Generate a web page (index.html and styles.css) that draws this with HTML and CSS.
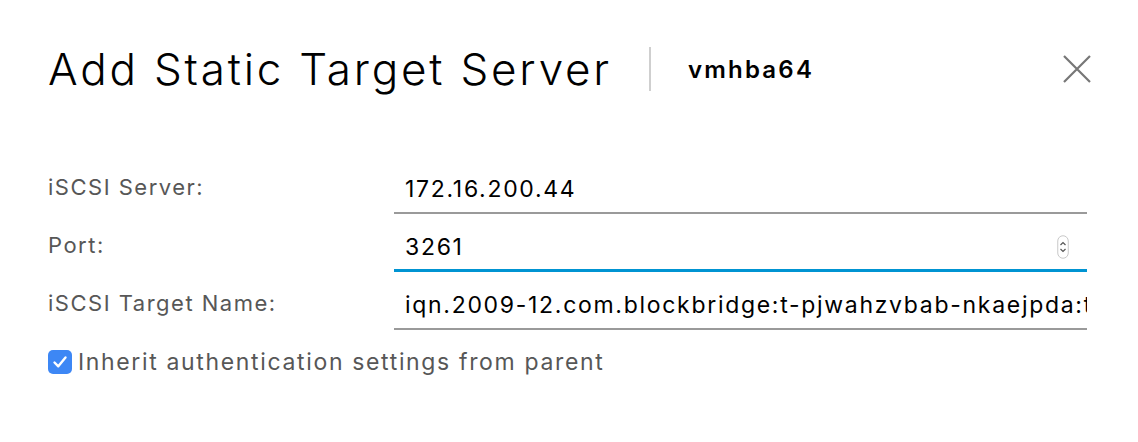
FILE: index.html
```html
<!DOCTYPE html>
<html>
<head>
<meta charset="utf-8">
<link rel="stylesheet" href="styles.css">
</head>
<body>
<div class="modal">
  <div class="header">
    <h3 class="title">Add Static Target Server</h3>
    <span class="sep"></span>
    <span class="subtitle">vmhba64</span>
    <button class="close" aria-label="Close">
      <svg width="30" height="30" viewBox="0 0 30 30"><path d="M2 2 L28 28 M28 2 L2 28" stroke="#777" stroke-width="2.2" fill="none"/></svg>
    </button>
  </div>
  <form class="form">
    <div class="row">
      <label class="label" for="srv">iSCSI Server:</label>
      <div class="field"><input id="srv" class="value" type="text" value="172.16.200.44" readonly></div>
    </div>
    <div class="row">
      <label class="label" for="port">Port:</label>
      <div class="field focused"><input id="port" class="value" type="text" value="3261" readonly>
        <span class="spin"><svg width="12" height="24" viewBox="0 0 12 24"><rect x="0.75" y="0.75" width="10.5" height="22.5" rx="5.25" fill="#fff" stroke="#c8c8c8" stroke-width="1"/><path d="M3.5 10 L6 7.5 L8.5 10 M3.5 14 L6 16.5 L8.5 14" stroke="#555" stroke-width="1.2" fill="none"/></svg></span>
      </div>
    </div>
    <div class="row">
      <label class="label" for="tgt">iSCSI Target Name:</label>
      <div class="field flush"><input id="tgt" class="value" type="text" value="iqn.2009-12.com.blockbridge:t-pjwahzvbab-nkaejpda:target-1" readonly></div>
    </div>
    <div class="check">
      <span class="box"><svg width="24" height="24" viewBox="0 0 24 24"><path d="M6.5 12.5 L10.3 16.3 L17.5 7.5" stroke="#fff" stroke-width="2.4" fill="none" stroke-linecap="round" stroke-linejoin="round"/></svg></span>
      <span class="check-label">Inherit authentication settings from parent</span>
    </div>
  </form>
</div>
</body>
</html>
```
FILE: styles.css
```css
* { box-sizing: border-box; }
html, body { margin: 0; padding: 0; background: #fff; }
body { font-family: "Inter", "Open Sans", sans-serif; width: 1138px; height: 442px; overflow: hidden; }
.modal { padding: 45px 46px 0 48px; }
.header { display: flex; align-items: center; height: 48px; }
.title { margin: 0; font-size: 44px; font-weight: 300; color: #000; line-height: 48px; letter-spacing: 2.8px; }
.sep { width: 2px; height: 44px; background: #cfcfcf; margin-left: 37px; }
.subtitle { margin-left: 37px; font-size: 24px; font-weight: 600; color: #000; letter-spacing: 2.2px; }
.close { margin-left: auto; border: 0; background: none; padding: 0; width: 30px; height: 30px; display: flex; margin-right: 0; }
.form { margin-top: 63px; display: flex; flex-direction: column; }
.row { display: flex; align-items: flex-end; height: 58px; }
.label { width: 346px; font-size: 22px; color: #575757; padding-bottom: 14px; letter-spacing: 1.5px; }
.field { width: 693px; height: 48px; border-bottom: 2px solid #9a9a9a; display: flex; align-items: center; padding: 0 10px 0 11px; }
.field.flush { padding-right: 0; }
.field.focused { border-bottom: 3px solid #0094d2; }
.value { font-family: "Inter", "Open Sans", sans-serif; font-size: 23px; color: #000; letter-spacing: 1.7px; flex: 1; min-width: 0; border: 0; outline: none; background: transparent; padding: 0; margin: 0; height: 30px; }
.spin { display: flex; margin-right: 8px; }
.check { display: flex; align-items: center; margin-top: 18px; height: 28px; }
.box { width: 24px; height: 24px; border-radius: 5px; background: #3d87f5; display: flex; }
.check-label { margin-left: 6px; font-size: 23px; color: #575757; letter-spacing: 1.65px; }
```
